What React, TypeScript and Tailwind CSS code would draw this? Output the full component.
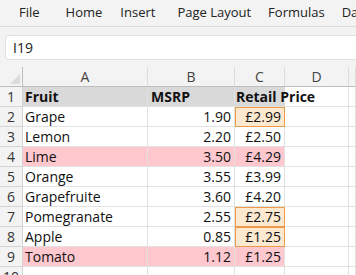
import React from 'react';

const font = { fontFamily: '"Open Sans", "Noto Sans", sans-serif' };

type Row = { fruit: string; msrp: string; retail: string; pink?: boolean; mark?: boolean };

const ROWS: Row[] = [
  { fruit: 'Grape', msrp: '1.90', retail: '£2.99', mark: true },
  { fruit: 'Lemon', msrp: '2.20', retail: '£2.50' },
  { fruit: 'Lime', msrp: '3.50', retail: '£4.29', pink: true },
  { fruit: 'Orange', msrp: '3.55', retail: '£3.99' },
  { fruit: 'Grapefruite', msrp: '3.60', retail: '£4.20' },
  { fruit: 'Pomegranate', msrp: '2.55', retail: '£2.75', mark: true },
  { fruit: 'Apple', msrp: '0.85', retail: '£1.25', mark: true },
  { fruit: 'Tomato', msrp: '1.12', retail: '£1.25', pink: true },
];

const cell = 'h-[20px] border-r border-b border-[#e1e1e1] flex items-center text-[14px] text-[#111] leading-none';
const rowHead = 'h-[20px] border-r border-b border-[#d4d4d4] bg-[#f3f3f3] flex items-center justify-center text-[14px] text-[#333]';

export default function App() {
  return (
    <div className="w-[356px] h-[275px] overflow-hidden bg-[#f3f3f3]" style={font}>
      {/* Ribbon tabs */}
      <div className="h-[27px] flex items-center border-b border-[#dcdcdc] text-[13px] text-[#222] whitespace-nowrap">
        <span className="ml-[19px]">File</span>
        <span className="ml-[26px]">Home</span>
        <span className="ml-[18px]">Insert</span>
        <span className="ml-[22px]">Page Layout</span>
        <span className="ml-[17px]">Formulas</span>
        <span className="ml-[17px]">Da</span>
      </div>

      {/* Name box */}
      <div className="h-[40px] pt-[8px] pl-[5px]">
        <div className="h-[25px] w-[400px] bg-white border border-[#e0e0e0] rounded-[4px] flex items-center pl-[7px] text-[14px] text-[#222]">
          I19
        </div>
      </div>

      {/* Grid */}
      <div className="grid grid-cols-[23px_125px_87px_50px_64px_1fr] bg-white">
        {/* column headers */}
        <div className="h-[20px] border-r border-b border-[#bdbdbd] bg-[#f3f3f3] relative">
          <svg className="absolute right-[2px] bottom-[2px]" width="10" height="10" viewBox="0 0 10 10">
            <polygon points="10,0 10,10 0,10" fill="#dcdcdc" />
          </svg>
        </div>
        {['A', 'B', 'C', 'D', ''].map((c, i) => (
          <div
            key={i}
            className="h-[20px] border-r border-b border-r-[#dcdcdc] border-b-[#bdbdbd] bg-[#f3f3f3] flex items-center justify-center text-[14px] text-[#444]"
          >
            {c}
          </div>
        ))}

        {/* row 1 */}
        <div className={rowHead}>1</div>
        <div className={`${cell} bg-[#d9d9d9] pl-[2px] font-bold`}>Fruit</div>
        <div className={`${cell} bg-[#d9d9d9] pl-[3px] font-bold`}>MSRP</div>
        <div className={`${cell} bg-[#d9d9d9] pl-[1px] font-bold border-r-[#d9d9d9] overflow-visible whitespace-nowrap relative z-10`}>
          Retail Price
        </div>
        <div className={cell}></div>
        <div className={cell}></div>

        {ROWS.map((r, i) => {
          const fill = r.pink ? 'bg-[#ffc7ce]' : '';
          return (
            <React.Fragment key={r.fruit}>
              <div className={rowHead}>{i + 2}</div>
              <div className={`${cell} ${fill} pl-[2px]`}>{r.fruit}</div>
              <div className={`${cell} ${fill} justify-end pr-[3px]`}>{r.msrp}</div>
              <div
                className={`${cell} ${fill} justify-end pr-[3px] ${
                  r.mark ? 'bg-[#fde9d0] outline outline-1 -outline-offset-1 outline-[#ec9a4e] relative' : ''
                }`}
              >
                {r.retail}
              </div>
              <div className={cell}></div>
              <div className={cell}></div>
            </React.Fragment>
          );
        })}

        <div className={rowHead}>10</div>
        <div className={cell}></div>
        <div className={cell}></div>
        <div className={cell}></div>
        <div className={cell}></div>
        <div className={cell}></div>
      </div>
    </div>
  );
}
